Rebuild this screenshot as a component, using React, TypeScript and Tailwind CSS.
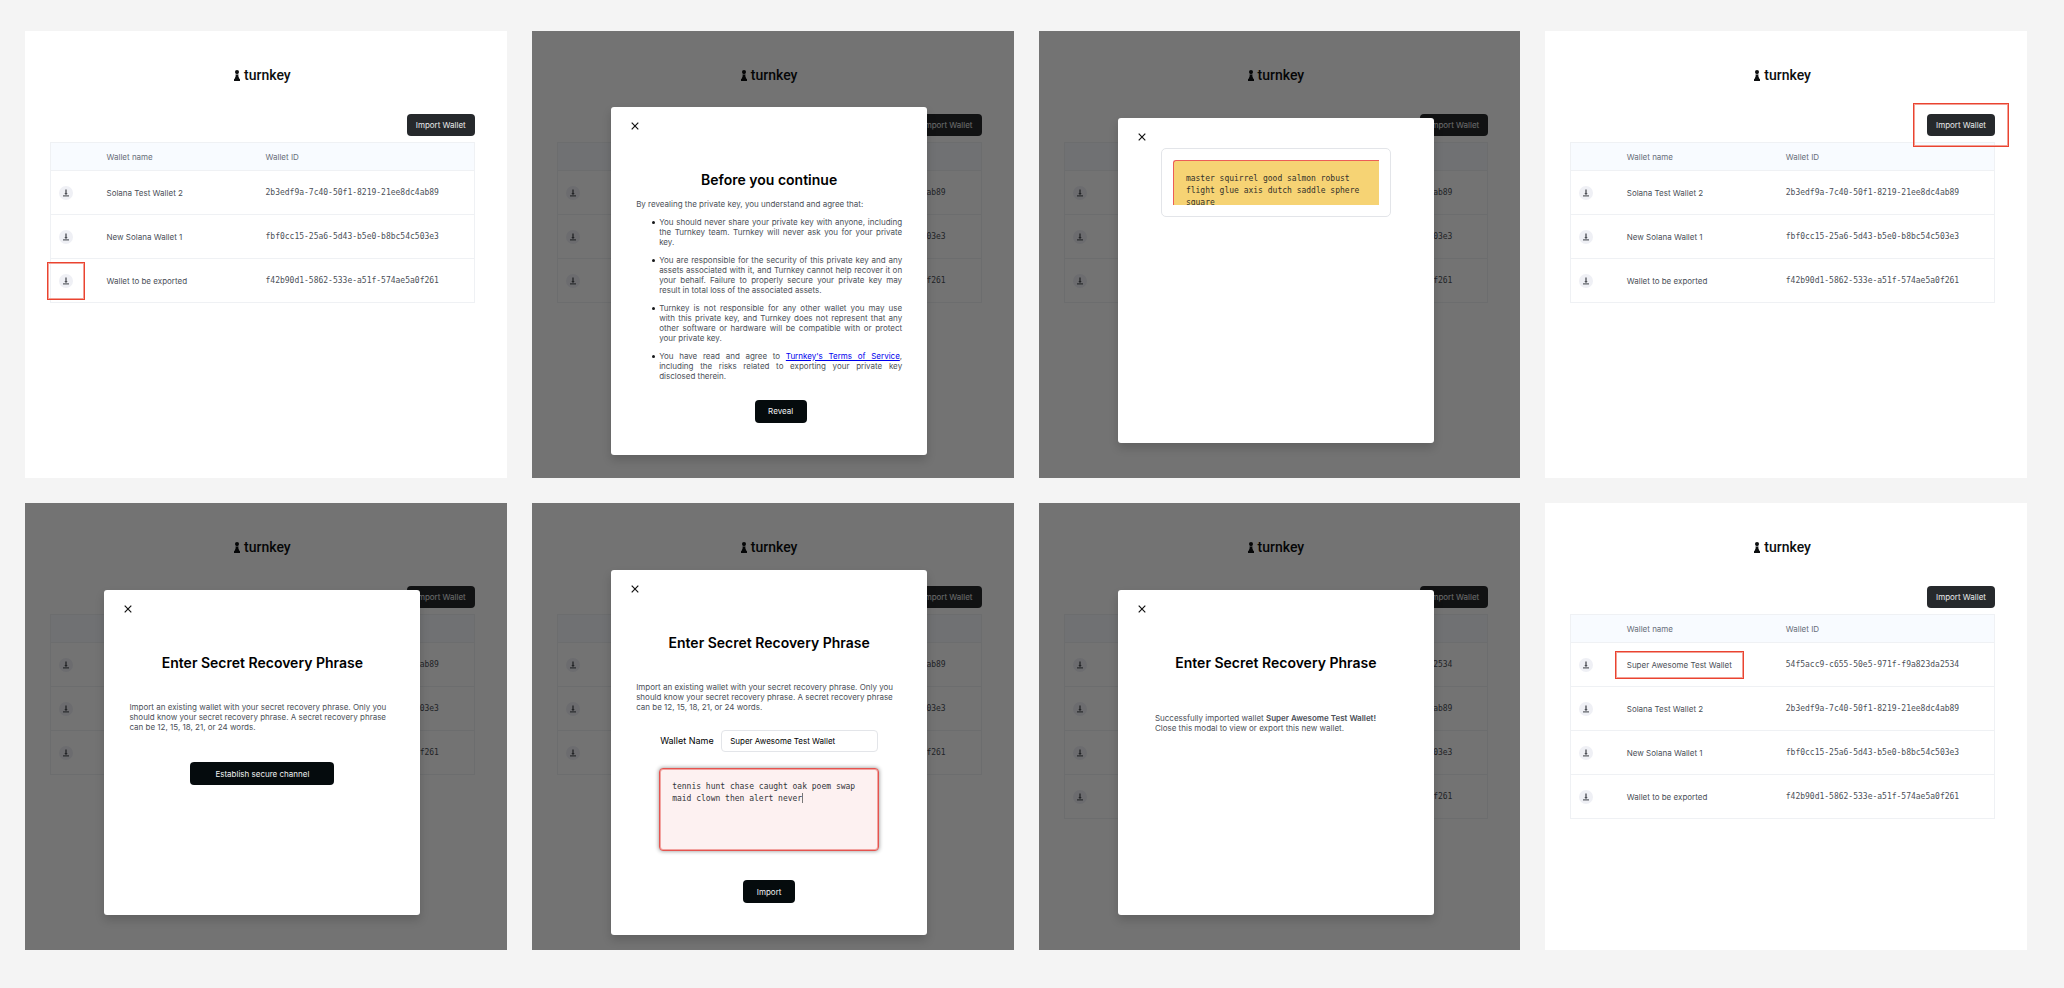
import { useId, type ReactNode } from "react";

type Wallet = { name: string; id: string };
type Highlight = "export" | "import" | "name";

const wallets: Wallet[] = [
  { name: "Solana Test Wallet 2", id: "2b3edf9a-7c40-50f1-8219-21ee8dc4ab89" },
  { name: "New Solana Wallet 1", id: "fbf0cc15-25a6-5d43-b5e0-b8bc54c503e3" },
  { name: "Wallet to be exported", id: "f42b90d1-5862-533e-a51f-574ae5a0f261" },
];

const importedWallets: Wallet[] = [
  { name: "Super Awesome Test Wallet", id: "54f5acc9-c655-50e5-971f-f9a823da2534" },
  ...wallets,
];

function Logo() {
  return (
    <div className="flex h-[18px] items-center justify-center gap-1 text-[#0d0f10]">
      <svg viewBox="0 0 12 22" className="h-[11px] w-[6px]" fill="currentColor" aria-hidden="true">
        <circle cx="6" cy="4.2" r="4.1" />
        <path d="M3 9h6v1.4L8.4 11.4l2 5.4L12 18.4V22H0v-3.6l1.6-1.6 2-5.4L3 10.4z" />
      </svg>
      <span className="font-['Roboto','Liberation_Sans',sans-serif] text-[14px] leading-[18px] font-medium">
        turnkey
      </span>
    </div>
  );
}

function DownloadIcon() {
  return (
    <svg viewBox="0 0 14 14" className="size-[14px]" aria-hidden="true">
      <path d="M6.4 3.4h1.2v3.9h1.1L7 9.1 5.3 7.3h1.1z" fill="#3c4046" />
      <path d="M4 9.4h6v1H4z" fill="#3c4046" />
    </svg>
  );
}

function HighlightBox({ className }: { className: string }) {
  return (
    <span
      aria-hidden="true"
      className={`pointer-events-none absolute border border-[#ea4330] ring-1 ring-[#f3a095] ring-inset ${className}`}
    />
  );
}

function WalletTable({ rows, highlight }: { rows: Wallet[]; highlight?: Highlight }) {
  return (
    <table className="mt-[6px] w-full table-fixed border-collapse border border-[#eff1f4] text-left text-[8px] leading-[10px]">
      <colgroup>
        <col className="w-14" />
        <col className="w-[159px]" />
        <col />
      </colgroup>
      <thead className="bg-[#f8fbff] text-[#686e79]">
        <tr className="h-7 border-b border-[#eff1f4]">
          <th />
          <th className="font-normal">Wallet name</th>
          <th className="font-normal">Wallet ID</th>
        </tr>
      </thead>
      <tbody className="text-[#4b5058]">
        {rows.map((wallet, index) => (
          <tr key={wallet.id} className="h-[44px] border-b border-[#eff1f4]">
            <td className="pl-2">
              <div className="relative size-[14px]">
                <button
                  type="button"
                  aria-label={`Export ${wallet.name}`}
                  className="block size-[14px] rounded-full bg-[#eff0f5]"
                >
                  <DownloadIcon />
                </button>
                {highlight === "export" && index === rows.length - 1 && (
                  <HighlightBox className="-inset-3" />
                )}
              </div>
            </td>
            <td>
              <span className="relative inline-block">
                {wallet.name}
                {highlight === "name" && index === 0 && (
                  <HighlightBox className="-inset-x-3 -inset-y-[9px]" />
                )}
              </span>
            </td>
            <td className="font-['DejaVu_Sans_Mono',monospace]">{wallet.id}</td>
          </tr>
        ))}
      </tbody>
    </table>
  );
}

function Panel({
  rows = wallets,
  highlight,
  children,
}: {
  rows?: Wallet[];
  highlight?: Highlight;
  children?: ReactNode;
}) {
  return (
    <section className="relative min-h-[447px] overflow-hidden bg-white pt-[35px] pr-8 pl-[25px]">
      <Logo />
      <div className="mt-[30px] flex justify-end">
        <div className="relative">
          <button
            type="button"
            className="block h-[22px] w-[68px] rounded-[4px] bg-[#26292c] text-[8px] leading-[10px] whitespace-nowrap text-[#e8e9ea]"
          >
            Import Wallet
          </button>
          {highlight === "import" && <HighlightBox className="-inset-x-[14px] -inset-y-[11px]" />}
        </div>
      </div>
      <WalletTable rows={rows} highlight={highlight} />
      {children && (
        <div className="absolute inset-0 flex items-center justify-center bg-black/55 pt-[52px] pr-8 pl-[25px]">
          {children}
        </div>
      )}
    </section>
  );
}

function Modal({ title, children }: { title?: string; children: ReactNode }) {
  return (
    <div
      role="dialog"
      aria-label={title ?? "Recovery phrase"}
      className="flex min-h-[325px] w-[316px] flex-col rounded-[3px] bg-white px-[25px] pt-3 shadow-[0_5px_10px_rgba(0,0,0,0.16)]"
    >
      <button
        type="button"
        aria-label="Close"
        className="-ml-2 flex size-[14px] items-center justify-center text-[#111111]"
      >
        <svg viewBox="0 0 8 8" className="size-2" aria-hidden="true">
          <path d="M0.7 0.7l6.6 6.6M7.3 0.7L0.7 7.3" stroke="currentColor" strokeWidth="1.2" fill="none" />
        </svg>
      </button>
      {title && (
        <h2 className="mt-[37px] text-center text-[14px] leading-5 font-semibold text-black">{title}</h2>
      )}
      {children}
    </div>
  );
}

function PrimaryButton({ className, children }: { className: string; children: ReactNode }) {
  return (
    <button
      type="button"
      className={`h-[23px] self-center rounded-[4px] bg-[#050b0d] text-[8px] leading-[10px] text-[#f0f1f1] ${className}`}
    >
      {children}
    </button>
  );
}

function Term({ children }: { children: ReactNode }) {
  return (
    <li className="relative text-justify">
      <span aria-hidden="true" className="absolute top-1 -left-[7px] size-[3px] rounded-full bg-[#16181a]" />
      {children}
    </li>
  );
}

function RevealModal() {
  return (
    <Modal title="Before you continue">
      <p className="mt-[9px] text-[8px] leading-[10px] text-[#4b5058]">
        By revealing the private key, you understand and agree that:
      </p>
      <div className="mt-2 flex flex-col pl-[23px]">
        <ul className="flex flex-col gap-2 text-[8px] leading-[10px] text-[#4b5058]">
          <Term>
            You should never share your private key with anyone, including the Turnkey team. Turnkey will
            never ask you for your private key.
          </Term>
          <Term>
            You are responsible for the security of this private key and any assets associated with it, and
            Turnkey cannot help recover it on your behalf. Failure to properly secure your private key may
            result in total loss of the associated assets.
          </Term>
          <Term>
            Turnkey is not responsible for any other wallet you may use with{"\u00a0"}this private key, and
            Turnkey does not represent that any other software or hardware will be compatible with or
            protect your private key.
          </Term>
          <Term>
            You have read and agree to{" "}
            <a href="#terms" className="text-[#0000ee] underline">
              Turnkey's Terms of Service
            </a>
            , including the risks related to exporting your private key disclosed therein.
          </Term>
        </ul>
        <PrimaryButton className="mt-[19px] mb-8 w-[52px]">Reveal</PrimaryButton>
      </div>
    </Modal>
  );
}

function PhraseModal() {
  return (
    <Modal>
      <div className="mx-[18px] mt-1 rounded-[5px] border border-[#e3e5e9] p-[11px]">
        <p className="h-[45px] overflow-hidden rounded-tl-[3px] border-t border-l border-[#ec5d57] bg-[#f6d374] px-3 pt-3 font-['DejaVu_Sans_Mono',monospace] text-[8px] leading-3 text-[#33312b]">
          master squirrel good salmon robust flight glue axis dutch saddle sphere square
        </p>
      </div>
    </Modal>
  );
}

function ImportIntro() {
  return (
    <p className="mt-[29px] text-[8px] leading-[10px] text-[#4b5058]">
      Import an existing wallet with your secret recovery phrase. Only you should know your secret recovery
      phrase. A secret recovery phrase can be 12, 15, 18, 21, or 24 words.
    </p>
  );
}

function ChannelModal() {
  return (
    <Modal title="Enter Secret Recovery Phrase">
      <ImportIntro />
      <PrimaryButton className="mt-[30px] w-36">Establish secure channel</PrimaryButton>
    </Modal>
  );
}

function ImportModal() {
  const nameId = useId();
  return (
    <Modal title="Enter Secret Recovery Phrase">
      <ImportIntro />
      <div className="mt-[18px] flex items-center gap-[6px] px-6">
        <label htmlFor={nameId} className="w-[55px] shrink-0 text-[9px] leading-3 whitespace-nowrap text-black">
          Wallet Name
        </label>
        <input
          id={nameId}
          type="text"
          defaultValue="Super Awesome Test Wallet"
          className="h-[22px] min-w-0 flex-1 rounded-[4px] border border-[#e3e5e9] px-2 text-[8px] leading-[10px] text-black"
        />
      </div>
      <div className="relative mx-[23px] mt-4">
        <textarea
          aria-label="Secret recovery phrase"
          defaultValue="tennis hunt chase caught oak poem swap maid clown then alert never"
          className="block h-[83px] w-full resize-none overflow-hidden rounded-[4px] border border-[#e5544f] bg-[#fdf1f1] px-3 pt-3 font-['DejaVu_Sans_Mono',monospace] text-[8px] leading-3 text-[#33353a] shadow-[0_0_4px_rgba(0,0,0,0.45)] ring-1 ring-[#f2a3a0] outline-none ring-inset"
        />
        <span aria-hidden="true" className="absolute top-[25px] left-[143px] h-[10px] w-px bg-[#777777]" />
      </div>
      <PrimaryButton className="mt-[29px] mb-8 w-[52px]">Import</PrimaryButton>
    </Modal>
  );
}

function SuccessModal() {
  return (
    <Modal title="Enter Secret Recovery Phrase">
      <p className="mt-10 pl-3 text-[8px] leading-[10px] text-[#4b5058]">
        Successfully imported wallet <strong className="font-semibold">Super Awesome Test Wallet!</strong>
        <br />
        Close this modal to view or export this new wallet.
      </p>
    </Modal>
  );
}

export default function App() {
  return (
    <main className="min-h-screen bg-[#f4f4f4] pt-[31px] pr-[37px] pb-[38px] pl-[25px] font-['Inter',sans-serif]">
      <div className="grid grid-cols-4 gap-[25px]">
        <Panel highlight="export" />
        <Panel>
          <RevealModal />
        </Panel>
        <Panel>
          <PhraseModal />
        </Panel>
        <Panel highlight="import" />
        <Panel>
          <ChannelModal />
        </Panel>
        <Panel>
          <ImportModal />
        </Panel>
        <Panel rows={importedWallets}>
          <SuccessModal />
        </Panel>
        <Panel rows={importedWallets} highlight="name" />
      </div>
    </main>
  );
}
